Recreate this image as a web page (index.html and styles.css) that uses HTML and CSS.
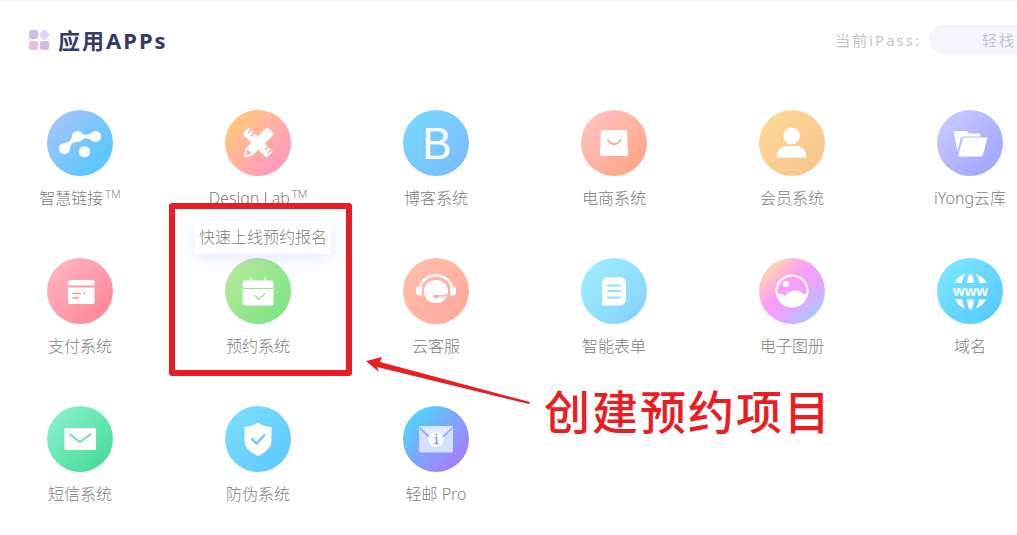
FILE: index.html
```
<!DOCTYPE html>
<html lang="zh-CN">
<head>
  <meta charset="UTF-8" />
  <meta name="viewport" content="width=device-width, initial-scale=1.0" />
  <title>应用APPs</title>
  <link rel="stylesheet" href="styles.css">
</head>
<body>
  <header class="top">
    <svg class="logo" viewBox="0 0 20 20" aria-hidden="true">
      <rect x="0" y="0" width="9" height="9" rx="2.500" fill="#d3b8ea" />
      <rect x="11" y="0.500" width="8.500" height="8.500" rx="2.500" fill="#e0d3fd" transform="rotate(45 15.2 4.8)" />
      <rect x="0" y="11" width="9" height="9" rx="2.500" fill="#eebbdc" />
      <rect x="11" y="11" width="9" height="9" rx="2.500" fill="#d3b8ea" />
    </svg>
    <h1>应用APPs</h1>
    <span class="pass-label" id="passLabel">当前iPass:</span>
    <button class="pass" type="button" aria-describedby="passLabel">轻栈</button>
  </header>

  <main class="apps">
    <a class="app" href="#">
      <svg class="icon link" viewBox="0 0 66 66" aria-hidden="true">
        <g fill="#fff">
          <circle cx="17.500" cy="38.500" r="5.600" />
          <circle cx="30.500" cy="26.500" r="5.600" />
          <circle cx="48.500" cy="26.500" r="5.600" />
          <circle cx="37.500" cy="41.800" r="5.600" />
          <path d="M18 33q6-.5 7.500-8l5 7q-7-.5-7.500 7zM33 22q6 5.500 13 0v9q-7-5.500-13 0z" />
        </g>
      </svg>
      <span class="name">智慧链接<sup>TM</sup></span>
    </a>
    <a class="app" href="#">
      <svg class="icon design" viewBox="0 0 66 66" aria-hidden="true">
        <g transform="rotate(-45 33 33)">
          <rect x="28.500" y="15.500" width="9" height="34" rx="1" fill="#fff" />
          <path d="M33 19h5M33 23h5M33 43h5M33 47h5" stroke="#ffa8a0" stroke-width="1.500" />
        </g>
        <g transform="rotate(45 33 33)">
          <path d="M28 17q0-2 2-2h6q2 0 2 2v28l-4 7q-1 1-2 0l-4-7z" fill="#fff" />
          <path d="M30 45h6l-2.500 4h-1z" fill="#ffa8a0" />
        </g>
      </svg>
      <span class="name">Design Lab<sup>TM</sup></span>
    </a>
    <a class="app" href="#">
      <svg class="icon blog" viewBox="0 0 66 66" aria-hidden="true">
        <text x="34" y="49" font-size="44">B</text>
      </svg>
      <span class="name">博客系统</span>
    </a>
    <a class="app" href="#">
      <svg class="icon shop" viewBox="0 0 66 66" aria-hidden="true">
        <path d="M21.500 20h23q1.500 0 1.600 1.500l1 23q0 1.500-1.500 1.500H20.400q-1.500 0-1.500-1.500l1-23q.1-1.500 1.600-1.500z" fill="#fff" />
        <path d="M27 30q6 8.500 12.500 0" fill="none" stroke="#ffa999" stroke-width="2" stroke-linecap="round" />
      </svg>
      <span class="name">电商系统</span>
    </a>
    <a class="app" href="#">
      <svg class="icon member" viewBox="0 0 66 66" aria-hidden="true">
        <circle cx="32.500" cy="26" r="8.400" fill="#fff" />
        <path d="M17.500 47.500Q18.500 36 29 36h7q10.500 0 11.500 11.500z" fill="#fff" />
      </svg>
      <span class="name">会员系统</span>
    </a>
    <a class="app" href="#">
      <svg class="icon cloud" viewBox="0 0 66 66" aria-hidden="true">
        <path d="M16.500 21H30l2 2.500h10.500l1.500 3H26.500L24 27.500 20.500 41z" fill="#fff" />
        <path d="M26.500 28H50l-5 18H21.500z" fill="#fff" stroke="#fff" stroke-linejoin="round" />
      </svg>
      <span class="name">iYong云库</span>
    </a>

    <a class="app" href="#">
      <svg class="icon pay" viewBox="0 0 66 66" aria-hidden="true">
        <rect x="21" y="22" width="26.500" height="24" rx="1.500" fill="#fff" />
        <path d="M21 28.500h26.500" stroke="#ff9aa8" stroke-width="2" />
        <path d="M25 35.500h9M36 35.500h2M25 40h7" stroke="#ff9aa8" stroke-width="1.500" />
      </svg>
      <span class="name">支付系统</span>
    </a>
    <div class="picked">
      <a class="app" href="#" aria-describedby="tip">
        <svg class="icon booking" viewBox="0 0 66 66" aria-hidden="true">
          <rect x="17.500" y="22.500" width="31" height="25" rx="2.500" fill="#fff" />
          <path d="M26 20.500v3M40 20.500v3" stroke="#fff" stroke-width="2" stroke-linecap="round" />
          <path d="M18 30.500h30" stroke="#98e38d" />
          <path d="M30 37.500l4 4 6-6" fill="none" stroke="#98e38d" stroke-width="1.500" />
        </svg>
        <span class="name">预约系统</span>
      </a>
      <div class="tip" id="tip" role="tooltip">快速上线预约报名</div>
      <div class="frame"></div>
      <svg class="arrow" viewBox="0 0 166 50" aria-hidden="true">
        <path d="M0 5 16 1 14 6 164 46 163 48 11 11 13 16z" fill="#e91e25" />
      </svg>
      <strong class="note">创建预约项目</strong>
    </div>
    <a class="app" href="#">
      <svg class="icon service" viewBox="0 0 66 66" aria-hidden="true">
        <path d="M17 31a16 13.500 0 0 1 32 0" fill="none" stroke="#fff" stroke-width="2.500" />
        <path d="M16 28.500h3v9h-3q-3 0-3-2.500v-4q0-2.500 3-2.500zM47 28.500h3q3 0 3 2.500v4q0 2.500-3 2.500h-3z" fill="#fff" />
        <ellipse cx="33" cy="33.500" rx="12" ry="11.500" fill="#fff" />
        <path d="M45.500 36.500q-6 2-12 1.500" fill="none" stroke="#ffb09f" stroke-width="1.500" />
        <rect x="30" y="37" width="6" height="3" rx="1.500" fill="#ffb09f" />
      </svg>
      <span class="name">云客服</span>
    </a>
    <a class="app" href="#">
      <svg class="icon form" viewBox="0 0 66 66" aria-hidden="true">
        <path d="M28 19h10q7 0 7 7v14q0 7.500-7 7.500H22q-1 0-1-1V26q0-7 7-7z" fill="#fff" />
        <path d="M27 27.500h12M27 33h12M27 39.500h12" stroke="#94e0ff" stroke-width="2" stroke-linecap="round" />
      </svg>
      <span class="name">智能表单</span>
    </a>
    <a class="app" href="#">
      <svg class="icon album" viewBox="0 0 66 66" aria-hidden="true">
        <circle cx="33" cy="33" r="15.500" fill="none" stroke="#fff" stroke-width="2" />
        <circle cx="27" cy="26" r="3" fill="#fff" />
        <path d="M18 36q5-1 8 2 3-5 10-5.500 6 0 8 3.500h4q-2 12.500-15 12.500T18 36z" fill="#fff" />
      </svg>
      <span class="name">电子图册</span>
    </a>
    <a class="app" href="#">
      <svg class="icon domain" viewBox="0 0 66 66" aria-hidden="true">
        <g fill="#fff">
          <path d="M17.500 25Q20 18.500 28.500 16 26 19 24.500 25zM30 25q1-9 3.500-9t3.500 9zM49.500 25Q47 18.500 38.500 16 41 19 42.500 25z" />
          <path d="M18 41.500Q21 48 28.500 50.500 26 47.500 25 41.500zM30 41.500q1 10 3.500 10t3.500-10zM49 41.500Q46 48 38.500 50.500 41 47.500 42 41.500z" />
        </g>
        <text x="33.500" y="38" font-size="15" font-weight="bold">www</text>
      </svg>
      <span class="name">域名</span>
    </a>

    <a class="app" href="#">
      <svg class="icon sms" viewBox="0 0 66 66" aria-hidden="true">
        <rect x="17.500" y="22" width="31.500" height="22" rx="1.500" fill="#fff" />
        <path d="M22.500 28 33 36l11-8" fill="none" stroke="#6ae5b0" stroke-width="2" />
      </svg>
      <span class="name">短信系统</span>
    </a>
    <a class="app" href="#">
      <svg class="icon guard" viewBox="0 0 66 66" aria-hidden="true">
        <path d="M33 16.500q5 4 13.500 4.500v14q0 9-13.500 15-13.500-6-13.500-15V21q8.500-.5 13.500-4.500z" fill="#fff" />
        <path d="M26.500 32.500l5 5 8.500-9" fill="none" stroke="#6ccfff" stroke-width="2.500" />
      </svg>
      <span class="name">防伪系统</span>
    </a>
    <a class="app" href="#">
      <svg class="icon mail" viewBox="0 0 66 66" aria-hidden="true">
        <rect x="16" y="20" width="34" height="26.500" rx="2" fill="#d3e0ff" />
        <path d="M17 20.500h32L33 34z" fill="#e2eaff" />
        <path d="M17 22l9 9M49 22l-9 9" stroke="#8aa6f6" stroke-width="1.500" />
        <circle cx="33" cy="33.500" r="7.500" fill="#fff" />
        <path d="M32 31.500h1.500v6M31.500 37.500h4" fill="none" stroke="#8295f0" stroke-width="1.500" />
        <circle cx="33.500" cy="28.800" r="1" fill="#8295f0" />
      </svg>
      <span class="name">轻邮 Pro</span>
    </a>
  </main>
</body>
</html>
```
FILE: styles.css
```
body {
  font-family: "Noto Sans", "Noto Sans CJK SC", sans-serif;
  background-color: #fff;
  color: #999;
  margin: 0;
  border-top: 1px solid #f6f6f6;
  overflow-x: hidden;
}

.top {
  display: flex;
  align-items: center;
  height: 29px;
  padding: 24px 0 0 29px;
  letter-spacing: 2px;
}

.logo {
  width: 20px;
  height: 20px;
  margin-right: 9px;
}

h1 {
  margin: 0;
  font-size: 22px;
  line-height: 30px;
  color: #353b65;
}

.pass-label {
  margin-left: auto;
  margin-right: 8px;
  font-size: 15px;
  color: #c3c6cd;
}

/* the pill runs past the right edge */
.pass {
  flex: none;
  width: 140px;
  height: 29px;
  margin-right: -52px;
  padding: 0;
  border: none;
  border-radius: 15px;
  background-color: #f4f5fa;
  color: #c3c6cd;
  font-family: inherit;
  font-size: 15px;
  letter-spacing: 2px;
  cursor: pointer;
}

.apps {
  display: grid;
  grid-template-columns: repeat(6, minmax(102px, 1fr));
  column-gap: 76px;
  row-gap: 48px;
  padding: 56px 0 28px 29px;
}

.app {
  display: flex;
  flex-direction: column;
  align-items: center;
  gap: 10px;
  color: inherit;
  text-decoration: none;
}

.icon {
  width: 66px;
  height: 66px;
  border-radius: 50%;
}

.icon text {
  fill: #fff;
  font-family: "Liberation Sans", sans-serif;
  text-anchor: middle;
}

.name {
  font-size: 16px;
  font-weight: 300;
  line-height: 24px;
  white-space: nowrap;
  color: #808080;
}

.name sup {
  margin-left: 2px;
  font-size: 11px;
  line-height: 0;
}

.link { background: linear-gradient(135deg, #b2c3fb, #45c8ff); }
.design { background: linear-gradient(135deg, #ffd072, #ff8fd0); }
.blog { background: linear-gradient(135deg, #74dcff, #7cb8ff); }
.shop { background: linear-gradient(135deg, #ffc5c8, #ffa17c); }
.member { background: linear-gradient(135deg, #ffdb93, #f5c290); }
.cloud { background: linear-gradient(135deg, #cdceff, #98a0ff); }
.pay { background: linear-gradient(135deg, #ffbac6, #ff8090); }
.booking { background: linear-gradient(135deg, #bfeb9c, #72e383); }
.service { background: linear-gradient(135deg, #ffc0ad, #ffa698); }
.form { background: linear-gradient(135deg, #a4f0ff, #80cfff); }
.album { background: linear-gradient(135deg, #ffe29c 8%, #fb9df6 42%, #e4a5ff 62%, #9dceff 92%); }
.domain { background: linear-gradient(135deg, #82eaff, #50c6ff); }
.sms { background: linear-gradient(135deg, #90f3d2, #3fd893); }
.guard { background: linear-gradient(135deg, #7ce0ff, #5dc5ff); }
.mail { background: linear-gradient(135deg, #43e0ff 5%, #7fa5fa 50%, #b073ff 95%); }

/* highlighted app with its tooltip and annotation */
.picked {
  position: relative;
}

.tip {
  position: absolute;
  bottom: calc(100% + 4px);
  left: -12px;
  padding: 0 4px;
  font-size: 16px;
  font-weight: 300;
  line-height: 33px;
  white-space: nowrap;
  color: #808080;
  background-color: #fff;
  box-shadow: 0 4px 18px rgba(90, 140, 255, 0.2);
}

.frame {
  position: absolute;
  top: -55px;
  bottom: -18px;
  left: -38px;
  right: -43px;
  border: 6px solid #e91e25;
  border-radius: 3px;
  pointer-events: none;
}

.arrow {
  position: absolute;
  top: 98px;
  left: calc(100% + 57px);
  width: 166px;
  height: 50px;
}

.note {
  position: absolute;
  top: 123px;
  left: calc(100% + 235px);
  z-index: 1;
  font-size: 46px;
  font-weight: 500;
  line-height: 60px;
  letter-spacing: 2px;
  white-space: nowrap;
  color: #e91e25;
}
```
